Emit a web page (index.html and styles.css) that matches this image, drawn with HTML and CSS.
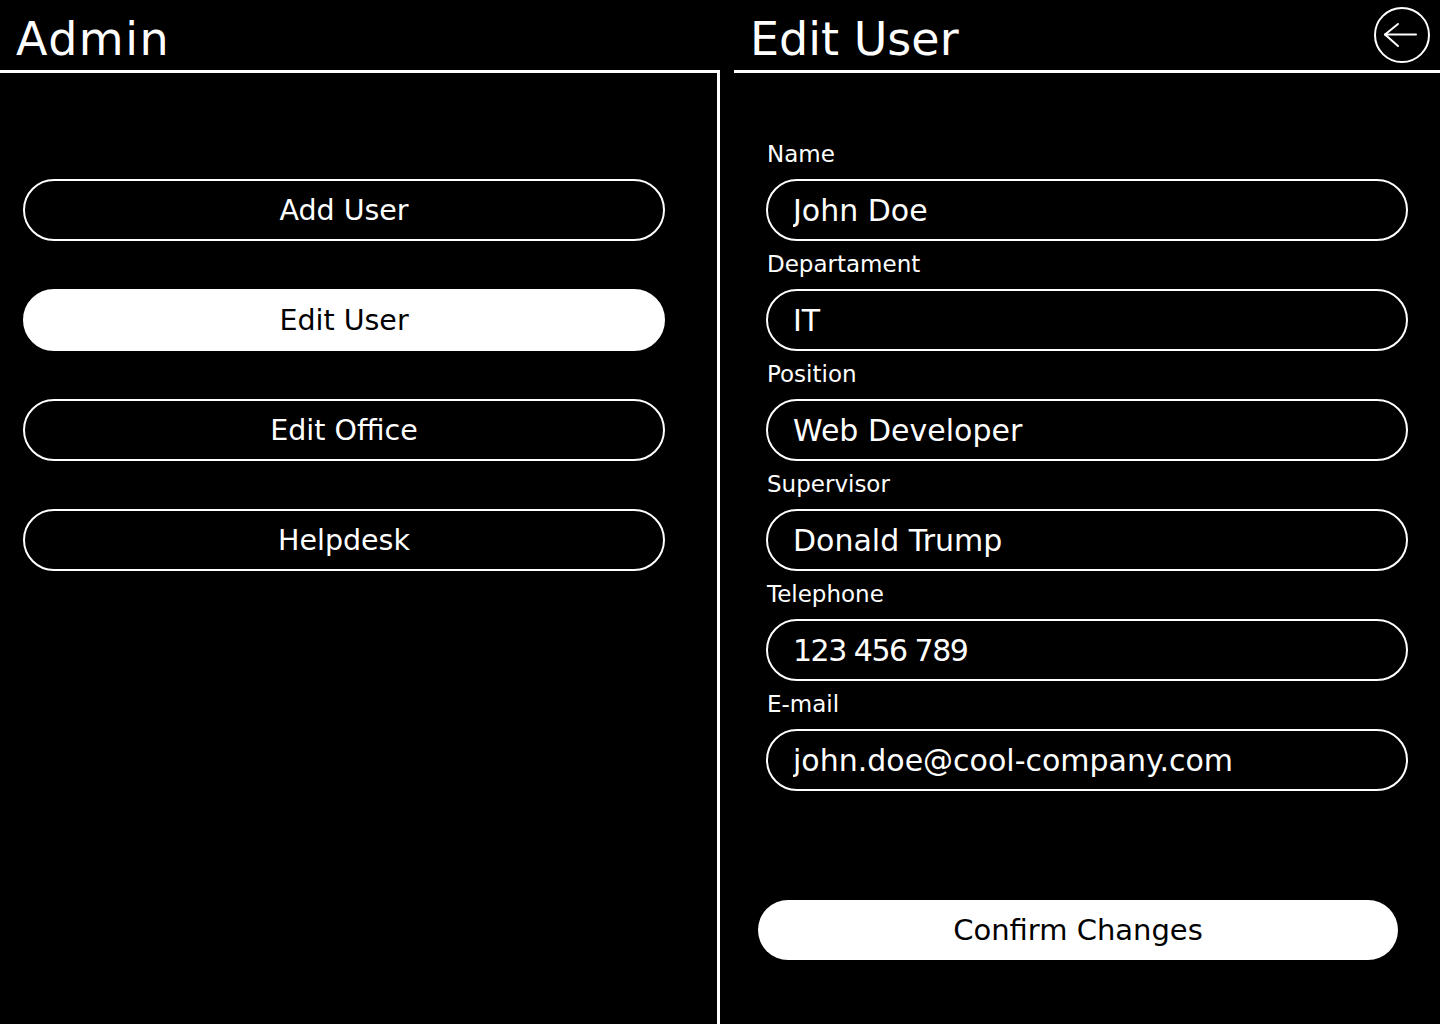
FILE: index.html
```html
<!DOCTYPE html>
<html lang="en">
<head>
<meta charset="utf-8">
<title>Admin - Edit User</title>
<link rel="stylesheet" href="styles.css">
</head>
<body>
<div class="app">
  <section class="panel panel-left">
    <header class="panel-header">
      <h1 class="panel-title title-wide">Admin</h1>
    </header>
    <nav class="menu">
      <button class="menu-btn">Add User</button>
      <button class="menu-btn is-active">Edit User</button>
      <button class="menu-btn">Edit Office</button>
      <button class="menu-btn">Helpdesk</button>
    </nav>
  </section>
  <section class="panel panel-right">
    <header class="panel-header header-right">
      <h1 class="panel-title">Edit User</h1>
      <button class="back-btn" aria-label="Back">
        <svg width="56" height="56" viewBox="0 0 56 56" fill="none" stroke="#fff" stroke-width="2" stroke-linecap="round" stroke-linejoin="round">
          <circle cx="28" cy="28" r="27"/>
          <path d="M11 27.5H42"/>
          <path d="M24 17L11 27.5L24 39"/>
        </svg>
      </button>
    </header>
    <form class="form">
      <div class="field">
        <label class="field-label">Name</label>
        <input class="field-input" type="text" value="John Doe">
      </div>
      <div class="field">
        <label class="field-label">Departament</label>
        <input class="field-input" type="text" value="IT">
      </div>
      <div class="field">
        <label class="field-label">Position</label>
        <input class="field-input" type="text" value="Web Developer">
      </div>
      <div class="field">
        <label class="field-label">Supervisor</label>
        <input class="field-input" type="text" value="Donald Trump">
      </div>
      <div class="field">
        <label class="field-label">Telephone</label>
        <input class="field-input input-numeric" type="text" value="123 456 789">
      </div>
      <div class="field">
        <label class="field-label">E-mail</label>
        <input class="field-input" type="text" value="john.doe@cool-company.com">
      </div>
      <button type="button" class="confirm-btn">Confirm Changes</button>
    </form>
  </section>
</div>
</body>
</html>
```

FILE: styles.css
```css
* {
  box-sizing: border-box;
}

html, body {
  margin: 0;
  padding: 0;
  background: #000;
}

body {
  color: #fff;
  font-family: "DejaVu Sans", "Liberation Sans", sans-serif;
  width: 1440px;
  height: 1024px;
  overflow: hidden;
}

.app {
  display: grid;
  grid-template-columns: 720px 1fr;
  column-gap: 14px;
  height: 1024px;
}

.panel {
  display: flex;
  flex-direction: column;
  min-height: 0;
}

.panel-header {
  height: 73px;
  border-bottom: 3px solid #fff;
  padding-left: 16px;
  display: flex;
  align-items: flex-start;
}

.panel-title {
  margin: 0;
  padding-top: 16px;
  font-size: 46px;
  line-height: 46px;
  font-weight: normal;
}

.title-wide {
  letter-spacing: 1.5px;
}

.header-right {
  justify-content: space-between;
  padding-right: 10px;
}

.back-btn {
  margin-top: 7px;
  padding: 0;
  border: 0;
  background: none;
  width: 56px;
  height: 56px;
  cursor: pointer;
}

.back-btn svg {
  display: block;
}

.menu {
  flex: 1;
  border-right: 3px solid #fff;
  padding: 106px 0 0 23px;
  display: flex;
  flex-direction: column;
  gap: 48px;
}

.menu-btn {
  width: 642px;
  height: 62px;
  border: 2px solid #fff;
  border-radius: 31px;
  background: #000;
  color: #fff;
  font-family: inherit;
  font-size: 28.5px;
  padding: 0;
  cursor: pointer;
}

.menu-btn.is-active {
  background: #fff;
  color: #000;
}

.form {
  padding: 68px 32px 0 32px;
  display: flex;
  flex-direction: column;
  gap: 10px;
}

.field {
  display: flex;
  flex-direction: column;
}

.field-label {
  font-size: 23px;
  line-height: 26px;
  height: 26px;
  margin-bottom: 12px;
  padding-left: 1px;
}

.field-input {
  width: 642px;
  height: 62px;
  border: 2px solid #fff;
  border-radius: 31px;
  background: #000;
  color: #fff;
  font-family: inherit;
  font-size: 30px;
  padding: 0 25px;
  outline: none;
}

.input-numeric {
  letter-spacing: -1.5px;
}

.confirm-btn {
  margin: 99px 0 0 -8px;
  width: 640px;
  height: 60px;
  border: 0;
  border-radius: 30px;
  background: #fff;
  color: #000;
  font-family: inherit;
  font-size: 29px;
  padding: 0;
  cursor: pointer;
}
```
